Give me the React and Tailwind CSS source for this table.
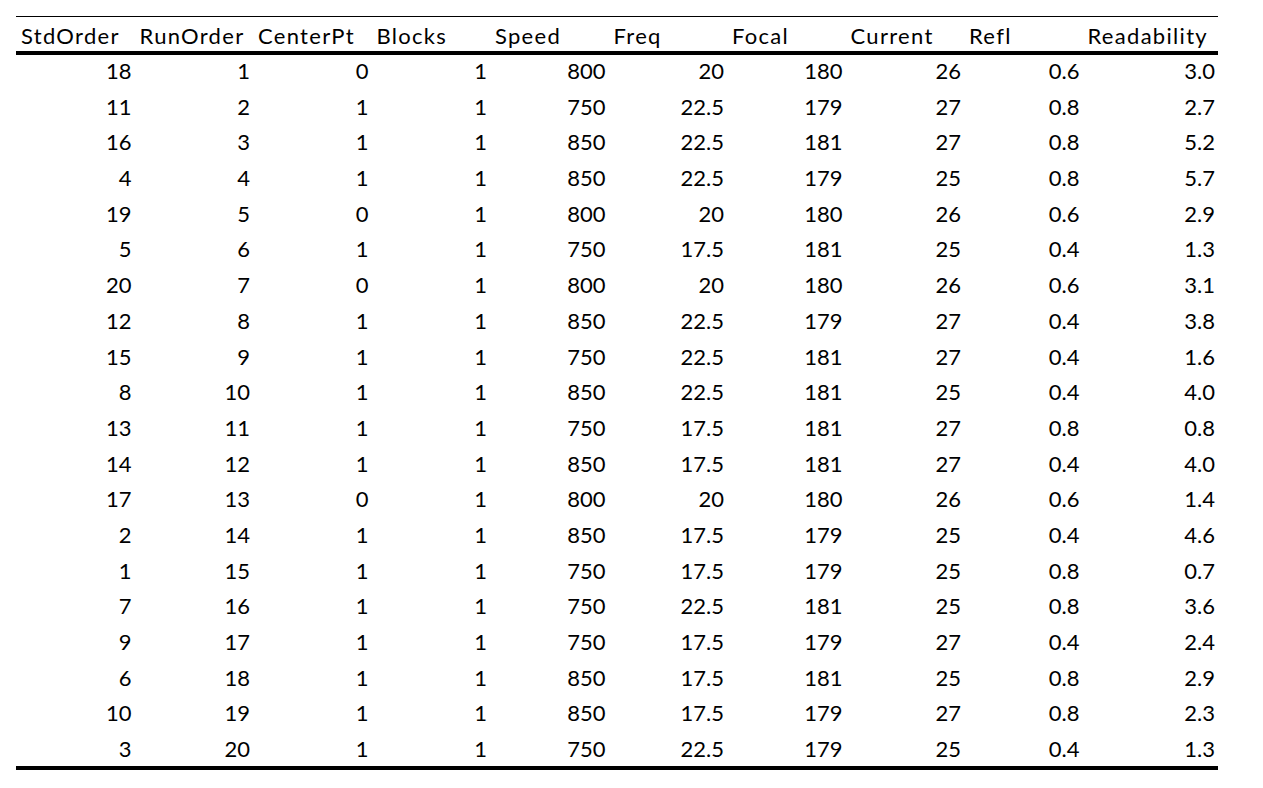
import React from "react";

const headers = ["StdOrder", "RunOrder", "CenterPt", "Blocks", "Speed", "Freq", "Focal", "Current", "Refl", "Readability"];

const rows = [
  ["18", "1", "0", "1", "800", "20", "180", "26", "0.6", "3.0"],
  ["11", "2", "1", "1", "750", "22.5", "179", "27", "0.8", "2.7"],
  ["16", "3", "1", "1", "850", "22.5", "181", "27", "0.8", "5.2"],
  ["4", "4", "1", "1", "850", "22.5", "179", "25", "0.8", "5.7"],
  ["19", "5", "0", "1", "800", "20", "180", "26", "0.6", "2.9"],
  ["5", "6", "1", "1", "750", "17.5", "181", "25", "0.4", "1.3"],
  ["20", "7", "0", "1", "800", "20", "180", "26", "0.6", "3.1"],
  ["12", "8", "1", "1", "850", "22.5", "179", "27", "0.4", "3.8"],
  ["15", "9", "1", "1", "750", "22.5", "181", "27", "0.4", "1.6"],
  ["8", "10", "1", "1", "850", "22.5", "181", "25", "0.4", "4.0"],
  ["13", "11", "1", "1", "750", "17.5", "181", "27", "0.8", "0.8"],
  ["14", "12", "1", "1", "850", "17.5", "181", "27", "0.4", "4.0"],
  ["17", "13", "0", "1", "800", "20", "180", "26", "0.6", "1.4"],
  ["2", "14", "1", "1", "850", "17.5", "179", "25", "0.4", "4.6"],
  ["1", "15", "1", "1", "750", "17.5", "179", "25", "0.8", "0.7"],
  ["7", "16", "1", "1", "750", "22.5", "181", "25", "0.8", "3.6"],
  ["9", "17", "1", "1", "750", "17.5", "179", "27", "0.4", "2.4"],
  ["6", "18", "1", "1", "850", "17.5", "181", "25", "0.8", "2.9"],
  ["10", "19", "1", "1", "850", "17.5", "179", "27", "0.8", "2.3"],
  ["3", "20", "1", "1", "750", "22.5", "179", "25", "0.4", "1.3"],
];

export default function App() {
  return (
    <div className="w-[1263px] h-[788px] bg-white text-black font-['Lato',_'Liberation_Sans',_sans-serif] text-[22px]">
      <div className="pt-[16px] pl-[16px]">
        <div className="w-[1202px] border-t border-black border-b-[4px]">
          <div className="grid grid-cols-[repeat(9,118.5px)_135.5px] h-[34px] border-b-[4px] border-black box-content">
            {headers.map((h) => (
              <div key={h} className="pl-[5px] pt-[4px] leading-[30px] tracking-[1.3px] whitespace-nowrap">
                {h}
              </div>
            ))}
          </div>
          {rows.map((r, i) => (
            <div
              key={i}
              className={
                i === rows.length - 1
                  ? "grid grid-cols-[repeat(9,118.5px)_135.5px] h-[32.7px] overflow-visible"
                  : "grid grid-cols-[repeat(9,118.5px)_135.5px] h-[35.7px]"
              }
            >
              {r.map((v, j) => (
                <div key={j} className="text-right pr-[3px] leading-[31.7px] whitespace-nowrap">
                  {v}
                </div>
              ))}
            </div>
          ))}
        </div>
      </div>
    </div>
  );
}
